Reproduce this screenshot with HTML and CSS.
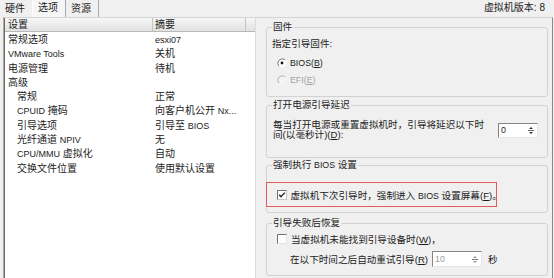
FILE: index.html
```html
<!DOCTYPE html>
<html lang="zh-CN">
<head>
<meta charset="utf-8">
<title>选项</title>
<link rel="stylesheet" href="styles.css">
</head>
<body>
<div class="win">
  <div class="tabbar">
    <div class="tabs">
      <div class="tab">硬件</div>
      <div class="tab sel">选项</div>
      <div class="tab">资源</div>
    </div>
    <div class="ver">虚拟机版本: 8</div>
  </div>
  <div class="page">
    <div class="list">
      <div class="lhead">
        <div class="c1">设置</div>
        <div class="c2">摘要</div>
        <div class="c3"></div>
      </div>
      <div class="rows">
        <div class="row"><div class="c1">常规选项</div><div class="c2"><span class="en">esxi07</span></div></div>
        <div class="row"><div class="c1"><span class="en">VMware Tools</span></div><div class="c2">关机</div></div>
        <div class="row"><div class="c1">电源管理</div><div class="c2">待机</div></div>
        <div class="row"><div class="c1">高级</div><div class="c2"></div></div>
        <div class="row sub"><div class="c1">常规</div><div class="c2">正常</div></div>
        <div class="row sub"><div class="c1"><span class="en">CPUID</span> 掩码</div><div class="c2">向客户机公开 <span class="en">Nx...</span></div></div>
        <div class="row sub"><div class="c1">引导选项</div><div class="c2">引导至 <span class="en">BIOS</span></div></div>
        <div class="row sub"><div class="c1">光纤通道 <span class="en">NPIV</span></div><div class="c2">无</div></div>
        <div class="row sub"><div class="c1"><span class="en">CPU/MMU</span> 虚拟化</div><div class="c2">自动</div></div>
        <div class="row sub"><div class="c1">交换文件位置</div><div class="c2">使用默认设置</div></div>
      </div>
    </div>
    <div class="right">
      <fieldset class="grp g1">
        <legend>固件</legend>
        <div class="fw-title">指定引导固件:</div>
        <div class="opt">
          <svg class="radio" width="10" height="10" viewBox="0 0 10 10"><circle cx="5" cy="5" r="4.4" fill="#fff"/><path d="M8.1 1.9 A4.4 4.4 0 0 0 1.9 8.1" fill="none" stroke="#7a7a7a" stroke-width="1"/><circle cx="5" cy="5" r="1.4" fill="#111"/></svg>
          <span><span class="en">BIOS(<u>B</u>)</span></span>
        </div>
        <div class="opt off">
          <svg class="radio" width="10" height="10" viewBox="0 0 10 10"><circle cx="5" cy="5" r="4.4" fill="#f4f4f4"/><path d="M8.1 1.9 A4.4 4.4 0 0 0 1.9 8.1" fill="none" stroke="#b0b0b0" stroke-width="1"/></svg>
          <span><span class="en">EFI(<u>E</u>)</span></span>
        </div>
      </fieldset>
      <fieldset class="grp g2">
        <legend>打开电源引导延迟</legend>
        <div class="delay">
          <div class="delay-text">每当打开电源或重置虚拟机时，引导将延迟以下时<br>间(以毫秒计)(<u>D</u>):</div>
          <div class="spin s1">
            <div class="val"><span class="en">0</span></div>
            <svg class="btns" width="10" height="13" viewBox="0 0 10 13"><path d="M3 5 L5 3 L7 5 Z" fill="#333"/><path d="M2 6.5 H8" stroke="#666" stroke-width="1"/><path d="M3 8 L5 10 L7 8 Z" fill="#333"/></svg>
          </div>
        </div>
      </fieldset>
      <fieldset class="grp g3">
        <legend>强制执行 <span class="en">BIOS</span> 设置</legend>
        <div class="force">
          <svg class="cb" width="10" height="10" viewBox="0 0 10 10"><rect x="0.5" y="0.5" width="9" height="9" fill="#fff" stroke="#c8c8c8"/><path d="M0.5 9.5 V0.5 H9.5" fill="none" stroke="#707070"/><path d="M2.2 4.8 L4 6.8 L7.8 2.6" fill="none" stroke="#222" stroke-width="1.4"/></svg>
          <span>虚拟机下次引导时，强制进入 <span class="en">BIOS</span> 设置屏幕(<u>F</u>)。</span>
        </div>
      </fieldset>
      <fieldset class="grp g4">
        <legend>引导失败后恢复</legend>
        <div class="cb-row">
          <svg class="cb" width="10" height="10" viewBox="0 0 10 10"><rect x="0.5" y="0.5" width="9" height="9" fill="#fff" stroke="#e4e4e4"/><path d="M0.5 9.5 V0.5 H9.5" fill="none" stroke="#707070"/></svg>
          <span>当虚拟机未能找到引导设备时(<u>W</u>)，</span>
        </div>
        <div class="retry">
          <span>在以下时间之后自动重试引导(<u>R</u>)</span>
          <div class="spin s2">
            <div class="val"><span class="en">10</span></div>
            <svg class="btns" width="10" height="13" viewBox="0 0 10 13"><path d="M3 5 L5 3 L7 5 Z" fill="#999"/><path d="M2 6.5 H8" stroke="#777" stroke-width="1"/><path d="M3 8 L5 10 L7 8 Z" fill="#999"/></svg>
          </div>
          <span class="sec">秒</span>
        </div>
      </fieldset>
    </div>
  </div>
</div>
</body>
</html>
```

FILE: styles.css
```css
* { box-sizing: border-box; }

body {
  margin: 0;
  background: #f0f0f0;
  font-family: "Liberation Sans", "Noto Sans CJK SC", sans-serif;
  font-size: 10px;
  color: #1c1c1c;
}

.en { font-size: 9px; }

u { text-decoration: underline; }

svg { flex-shrink: 0; }

.win {
  width: 554px;
  height: 278px;
  overflow: hidden;
  display: flex;
  flex-direction: column;
}

.tabbar {
  height: 17px;
  display: flex;
  justify-content: space-between;
  padding-right: 9px;
}

.tabs { display: flex; }

.tab {
  padding: 2px 7px 0 5px;
  line-height: 13px;
  border-right: 1px solid #a8a8a8;
}

.tab.sel {
  padding-top: 0;
  line-height: 15px;
  background: #f6f6f6;
  border-left: 1px solid #ffffff;
  margin-left: -1px;
}

.ver {
  line-height: 16px;
  color: #222;
}

.page {
  flex: 1;
  display: flex;
  margin-left: 3px;
  margin-right: 1px;
  border-left: 1px solid #a8a8a8;
  border-right: 1px solid #8a8a8a;
  border-top: 1px solid #d4d4d4;
}

.list {
  width: 252px;
  background: #fff;
  border-left: 1px solid #6c6c6c;
  border-right: 1px solid #dcdcdc;
}

.lhead {
  display: flex;
  height: 14px;
  line-height: 13px;
  background: linear-gradient(#f7f7f7, #e1e1e1);
  border-bottom: 1px solid #b9b9b9;
}

.lhead .c2 {
  width: 93px;
  border-left: 1px solid #c4c4c4;
  padding-left: 2px;
}

.lhead .c3 {
  flex: 1;
  border-left: 1px solid #c4c4c4;
}

.rows { padding-top: 1px; }

.row {
  display: flex;
  height: 14.3px;
  line-height: 14.3px;
  white-space: nowrap;
}

.c1 {
  width: 147px;
  padding-left: 3px;
}

.row .c2 { padding-left: 3px; }

.row.sub .c1 { padding-left: 12px; }

.right {
  flex: 1;
  display: flex;
  flex-direction: column;
  padding: 2px 4px 0 10px;
  font-size: 9.6px;
}

.right .en { font-size: 8.8px; }

.grp {
  margin: 0;
  padding: 0 5px;
  border: 1px solid #d2d2d2;
  border-radius: 3px;
  min-width: 0;
}

.grp legend {
  padding: 0 1px;
  line-height: 14px;
  color: #222;
}

.g1 { height: 77px; }
.g2 { height: 60px; margin-top: 1px; }
.g3 { height: 55px; }
.g4 { height: 60px; margin-top: 3px; }

.fw-title {
  padding-top: 3px;
  line-height: 14px;
  margin-bottom: 3px;
}

.opt {
  height: 17px;
  display: flex;
  align-items: center;
  gap: 3px;
  padding-left: 5px;
}

.opt.off { color: #a3a3a3; }

.delay {
  display: flex;
  align-items: center;
  padding-top: 8px;
}

.delay-text {
  line-height: 10px;
  white-space: nowrap;
  padding-left: 1px;
}

.spin {
  display: flex;
  align-items: center;
  height: 15px;
  background: #fff;
  border: 1px solid;
  border-color: #858585 #e6e6e6 #e6e6e6 #858585;
}

.spin .val {
  flex: 1;
  padding-left: 2px;
  line-height: 13px;
}

.spin .btns { margin-right: 1px; }

.s1 {
  width: 40px;
  margin-left: auto;
  margin-right: 4px;
}

.s2 {
  width: 50px;
  height: 16px;
  margin-left: 4px;
  color: #9a9a9a;
}

.force {
  margin: 10px 0 0 -6px;
  width: 231px;
  height: 25px;
  border: 1.5px solid #e25a5a;
  display: flex;
  align-items: center;
  gap: 4px;
  padding-left: 9.5px;
  white-space: nowrap;
}

.cb-row {
  margin-top: 1px;
  height: 15px;
  display: flex;
  align-items: center;
  gap: 4px;
  padding-left: 5px;
  white-space: nowrap;
}

.retry {
  margin-top: 5px;
  height: 16px;
  display: flex;
  align-items: center;
  padding-left: 18px;
  white-space: nowrap;
}

.sec { margin-left: 6px; }
```
